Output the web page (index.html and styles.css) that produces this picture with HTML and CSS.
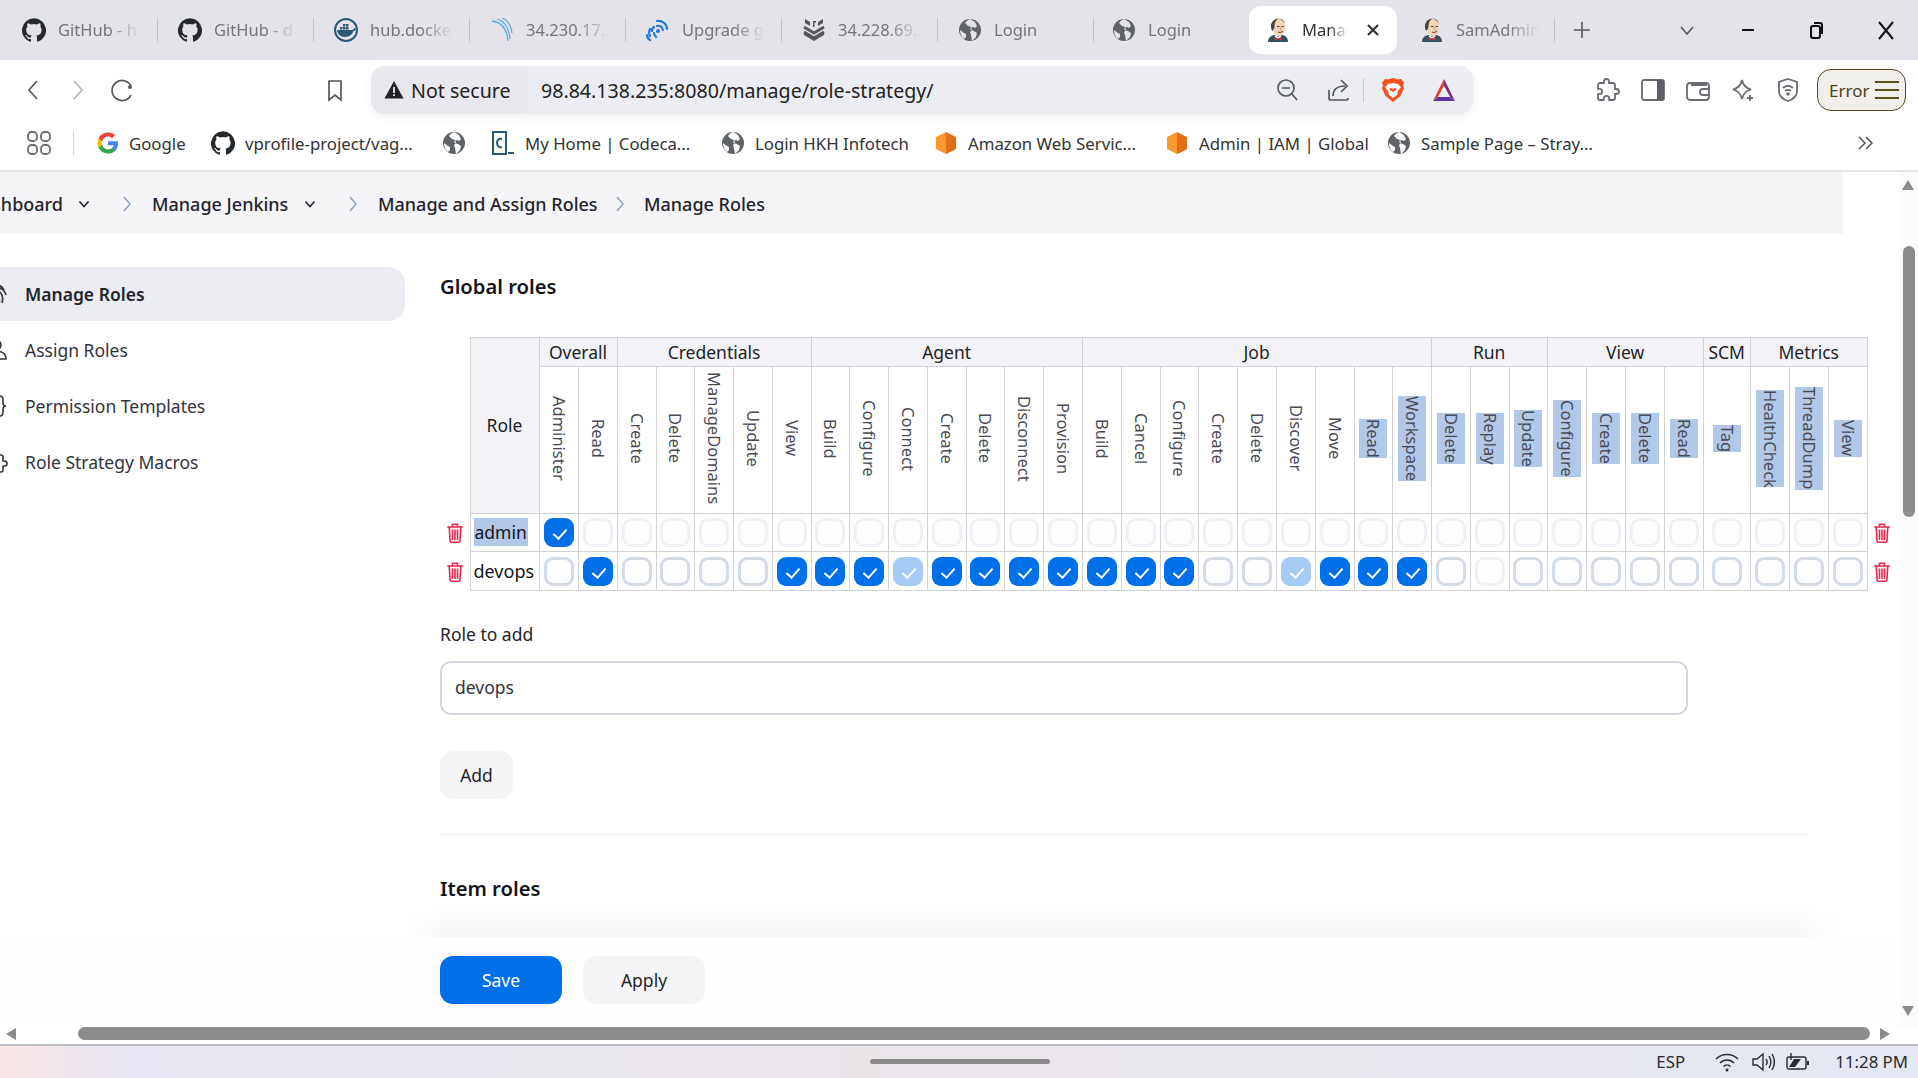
FILE: index.html
```html
<!DOCTYPE html>
<html lang="en">
<head>
<meta charset="utf-8">
<title>Manage Roles</title>
<link rel="stylesheet" href="styles.css">
</head>
<body>
<svg class="defs" width="0" height="0" aria-hidden="true">
  <symbol id="gh" viewBox="0 0 24 24"><path d="M12 .3a12 12 0 0 0-3.8 23.4c.6.1.8-.3.8-.6v-2c-3.3.7-4-1.6-4-1.6-.6-1.4-1.4-1.8-1.4-1.8-1-.7.1-.7.1-.7 1.2.1 1.8 1.2 1.8 1.2 1 1.8 2.8 1.3 3.5 1 0-.8.4-1.3.7-1.6-2.7-.3-5.5-1.3-5.5-6 0-1.2.5-2.3 1.3-3.1-.2-.4-.6-1.6 0-3.2 0 0 1-.3 3.4 1.2a11.5 11.5 0 0 1 6 0c2.3-1.5 3.3-1.2 3.3-1.2.7 1.6.2 2.8.1 3.2.8.8 1.3 1.9 1.3 3.2 0 4.6-2.8 5.6-5.5 5.9.5.4.9 1.1.9 2.2v3.3c0 .3.2.7.8.6A12 12 0 0 0 12 .3" fill="#24292e"/></symbol>
  <symbol id="globe" viewBox="0 0 24 24"><circle cx="12" cy="12" r="11" fill="#5f6368"/><path d="M12 1c-2 1-4 2-5 4l3 3 3 1 1 3-2 2 1 3 1 6 4-4 1-4-3-2-3-1-1-2 3-1 2 1 2-2-2-4zM2 12l4 3 2 1 0 3-2 2c-3-2-4-6-4-9z" fill="#e3e3e9"/></symbol>
  <symbol id="globew" viewBox="0 0 24 24"><circle cx="12" cy="12" r="11" fill="#5f6368"/><path d="M12 1c-2 1-4 2-5 4l3 3 3 1 1 3-2 2 1 3 1 6 4-4 1-4-3-2-3-1-1-2 3-1 2 1 2-2-2-4zM2 12l4 3 2 1 0 3-2 2c-3-2-4-6-4-9z" fill="#fff"/></symbol>
  <symbol id="docker" viewBox="0 0 24 24"><circle cx="12" cy="12" r="11" fill="#e3e3e9" stroke="#2b5a78" stroke-width="2"/><path d="M3 12h15c1 0 2-1 2.500-2l1.500 1c-.5 1.500-1.500 2-2.500 2-1 3-4 6-9 6-4 0-7-3-7.500-7z" fill="#2b5a78"/><path d="M6 9h2.500v2.500H6zM9 9h2.500v2.500H9zM12 9h2.500v2.500H12zM9 6h2.500v2.500H9zM12 6h2.500v2.500H12z" fill="#2b5a78"/></symbol>
  <symbol id="arcs" viewBox="0 0 24 24"><g fill="none" stroke="#5aa9e6" stroke-width="1.300"><path d="M2 3c9 1 15 8 16 20"/><path d="M7 1c7 2 12 9 13 20"/><path d="M12 0c6 2 9 8 10 15"/></g></symbol>
  <symbol id="signal" viewBox="0 0 24 24"><g fill="none" stroke="#1f78d8" stroke-width="2.200" stroke-linecap="round"><path d="M11 3c5-1 10 3 10 8"/><path d="M11 8c3-1 5 1 6 4"/><path d="M8 9c-2 1-2 3-2 4"/><path d="M4 11c-1 2-1 5 0 7"/><path d="M8 15c0 2 1 3 2 4"/><path d="M1 17c0 2 1 4 3 5"/></g><circle cx="12" cy="13" r="2" fill="#1f78d8"/></symbol>
  <symbol id="stack" viewBox="0 0 24 24"><g fill="none" stroke="#55585c" stroke-width="3"><path d="M2 9l10 6 10-6"/><path d="M2 14l10 6 10-6"/></g><path d="M3 1l5 3v4l-5-3zM21 1l-5 3v4l5-3zM12 21l-10-6v2l10 6 10-6v-2z" fill="#55585c"/><path d="M11 3h3v1.500h-1.500V9H11z" fill="#55585c"/></symbol>
  <symbol id="jenkins" viewBox="0 0 24 24"><path d="M2 24c0-4 2-6 6-7l4 1 5-1c3 1 5 3 5 7z" fill="#335061"/><path d="M9 17l3 2 3-2v2l-3 2-3-2z" fill="#fff"/><path d="M8.500 19l3.500 1.500 3.500-1.500v3.500L12 21l-3.500 1.500z" fill="#d33833"/><path d="M6 10c0-6 3-9.500 7-9.500s6.500 3.500 6 9c-.3 5-2.500 8.500-6.500 8.500C10 18.500 8 15.500 7 13c-1.500-.5-2-2.500-1-3z" fill="#f0d6b7"/><path d="M6.500 13C3 8 5.500 1 12.500.4 9.500 2 8.500 5 8.500 8c0 2-1 3.500-2 5z" fill="#4a423c"/><path d="M12.500.4c3.500 0 6 2 6.500 5-2-2.500-4-4-6.500-5z" fill="#8a7f76"/><path d="M11 8.500h2.500M15.500 8.500H18" stroke="#4a423c" stroke-width="1.200"/><path d="M12 14c2 .8 3.500.8 5-.8" stroke="#8a4a40" fill="none" stroke-width="1.100"/><path d="M14.500 9v3h1.500" stroke="#c9a283" fill="none" stroke-width=".8"/></symbol>
  <symbol id="cube" viewBox="0 0 24 24"><path d="M12 1l10 5v12l-10 5z" fill="#e86f17"/><path d="M12 1L2 6v12l10 5V9z" fill="#fb9a2c"/><path d="M12 9l10-3v12l-10 5z" fill="#e07015"/></symbol>
  <symbol id="trash" viewBox="0 0 16 20"><g fill="none" stroke="#e8274b" stroke-width="1.600" stroke-linecap="round"><path d="M.8 4h14.400"/><path d="M5.500 3.500V1.200h5v2.300"/><path d="M2.200 4l.9 14c0 .8.500 1.200 1.200 1.200h7.400c.7 0 1.200-.4 1.200-1.200l.9-14"/><path d="M5.500 7v9.500M8 7v9.500M10.500 7v9.500"/></g></symbol>
</svg>

<div class="screen">
  <header class="tabs">
    <div class="tab"><svg class="fav"><use href="#gh"/></svg><span class="tab-name">GitHub - h</span></div><i class="tab-sep"></i>
    <div class="tab"><svg class="fav"><use href="#gh"/></svg><span class="tab-name">GitHub - d</span></div><i class="tab-sep"></i>
    <div class="tab"><svg class="fav"><use href="#docker"/></svg><span class="tab-name">hub.docke</span></div><i class="tab-sep"></i>
    <div class="tab"><svg class="fav"><use href="#arcs"/></svg><span class="tab-name">34.230.17.1</span></div><i class="tab-sep"></i>
    <div class="tab"><svg class="fav"><use href="#signal"/></svg><span class="tab-name">Upgrade g</span></div><i class="tab-sep"></i>
    <div class="tab"><svg class="fav"><use href="#stack"/></svg><span class="tab-name">34.228.69.</span></div><i class="tab-sep"></i>
    <div class="tab"><svg class="fav"><use href="#globe"/></svg><span class="tab-name">Login</span></div><i class="tab-sep"></i>
    <div class="tab tab-wide"><svg class="fav"><use href="#globe"/></svg><span class="tab-name">Login</span></div>
    <div class="tab tab-active"><svg class="fav"><use href="#jenkins"/></svg><span class="tab-name">Manage</span>
      <svg class="tab-close" viewBox="0 0 14 14"><path d="M2 2l10 10M12 2L2 12"/></svg></div>
    <div class="tab tab-last"><svg class="fav"><use href="#jenkins"/></svg><span class="tab-name">SamAdmin</span></div><i class="tab-sep"></i>
    <div class="win">
      <svg class="win-ic" viewBox="0 0 24 24"><path d="M4 12h16M12 4v16"/></svg>
      <svg class="win-ic" viewBox="0 0 24 24"><path d="M6 9l6 7 6-7"/></svg>
      <svg class="win-ic win-strong" viewBox="0 0 24 24"><path d="M6 12h12"/></svg>
      <svg class="win-ic win-strong" viewBox="0 0 24 24"><rect x="7" y="8" width="9" height="12" rx="2"/><path d="M10 5h6a2 2 0 0 1 2 2v9"/></svg>
      <svg class="win-ic win-strong" viewBox="0 0 24 24"><path d="M5 4l14 17M19 4L5 21"/></svg>
    </div>
  </header>

  <nav class="toolbar">
    <svg class="tool" viewBox="0 0 24 24"><path d="M16 3L8 12l8 9"/></svg>
    <svg class="tool tool-off" viewBox="0 0 24 24"><path d="M8 3l8 9-8 9"/></svg>
    <svg class="tool" viewBox="0 0 24 24"><path d="M20 8a10 10 0 1 0 0 9"/><circle cx="19" cy="9" r="2" class="tool-fill"/></svg>
    <svg class="tool tool-mark" viewBox="0 0 24 24"><path d="M6 3h12v19l-6-5-6 5z"/></svg>
    <div class="address">
      <div class="secure">
        <svg class="warn" viewBox="0 0 20 20"><path d="M10 1l9.500 17.500H.5z" fill="#222"/><path d="M9.100 7h1.800v6H9.100zM9.100 14.300h1.800v1.800H9.100z" fill="#ecedf2"/></svg>
        <span>Not secure</span>
      </div>
      <span class="url">98.84.138.235:8080/manage/role-strategy/</span>
      <div class="addr-tools">
        <svg class="tool" viewBox="0 0 24 24"><circle cx="11" cy="10" r="8"/><path d="M7 10h8M17 16l5 6"/></svg>
        <svg class="tool" viewBox="0 0 24 24"><path d="M3 12v8a2 2 0 0 0 2 2h15a2 2 0 0 0 2-2"/><path d="M7 18c0-7 5-10 12-10"/><path d="M15 2l6 6-6 6"/></svg>
        <i class="addr-sep"></i>
        <svg class="logo" viewBox="0 0 24 24"><path d="M12 0l5 1.500 3-.5 3 3.500-1 3 1 3-3.500 7.500L12 24l-7.500-6L1 10.500l1-3-1-3L4 1l3 .5z" fill="#f4511e"/><path d="M7 6l5-1 5 1 3 3-3 4-1 4-4 3-4-3-1-4-3-4zM10 10l-2 1 1 1 3 2 3-2 1-1-2-1-2 1z" fill="#fff"/></svg>
        <svg class="logo logo-bat" viewBox="0 0 24 24"><path d="M12 1L1 23l5-4 6-11z" fill="#e2422d"/><path d="M12 1l11 22-5-4-6-11z" fill="#7b2b84"/><path d="M1 23h22l-5-4H6z" fill="#5f33a0"/><path d="M12 8l6 11H6z" fill="#ecedf2"/></svg>
      </div>
    </div>
    <div class="extensions">
      <svg class="ext" viewBox="0 0 24 24"><path d="M20.500 11H19V7a2 2 0 0 0-2-2h-4V3.500a2.500 2.500 0 0 0-5 0V5H4a2 2 0 0 0-2 2v3.800h1.500a2.700 2.700 0 0 1 0 5.400H2V20a2 2 0 0 0 2 2h3.800v-1.500a2.700 2.700 0 0 1 5.400 0V22H17a2 2 0 0 0 2-2v-4h1.500a2.500 2.500 0 0 0 0-5z"/></svg>
      <svg class="ext" viewBox="0 0 24 24"><rect x="1" y="2" width="22" height="20" rx="2"/><path d="M16 2h5a2 2 0 0 1 2 2v16a2 2 0 0 1-2 2h-5z" class="ext-fill"/></svg>
      <svg class="ext" viewBox="0 0 24 24"><path d="M4 5h14c1 0 2 1 2 2H5"/><rect x="1" y="5" width="22" height="17" rx="3"/><path d="M23 11h-6a2.500 2.500 0 0 0 0 6h6"/></svg>
      <svg class="ext" viewBox="0 0 24 24"><path d="M11 2c1 5 3 8 9 9.500-6 1.500-8 5-9 9.500-1-4.500-3-8-9-9.500 6-1.500 8-4.500 9-9.500z"/><path d="M19 17v6M16 20h6"/></svg>
      <svg class="ext" viewBox="0 0 24 24"><path d="M12 1l9 3v9c0 4-3 8-9 10-6-2-9-6-9-10V4z"/><path d="M7 10c3-3 7-3 10 0M9 13c2-1.500 4-1.500 6 0"/><circle cx="12" cy="16" r=".8"/></svg>
      <div class="error-btn"><span>Error</span>
        <svg class="burger" viewBox="0 0 24 20"><path d="M0 2h24M0 10h24M0 18h24"/></svg>
      </div>
    </div>
  </nav>

  <div class="bookmarks">
    <svg class="apps" viewBox="0 0 24 24"><rect x="1" y="1" width="9" height="9" rx="3.500"/><rect x="14" y="1" width="9" height="9" rx="3.500"/><rect x="1" y="14" width="9" height="9" rx="3.500"/><rect x="14" y="14" width="9" height="9" rx="3.500"/></svg>
    <i class="bm-sep"></i>
    <div class="bm"><svg class="bm-ic bm-small" viewBox="0 0 24 24"><path d="M23 12.300c0-.8-.1-1.600-.2-2.300H12v4.500h6.200c-.3 1.400-1.100 2.600-2.300 3.400v2.800h3.700c2.200-2 3.400-5 3.400-8.400z" fill="#4285f4"/><path d="M12 23.500c3.100 0 5.700-1 7.600-2.800l-3.700-2.800c-1 .7-2.300 1.100-3.900 1.100-3 0-5.500-2-6.400-4.700H1.700v2.900c1.900 3.800 5.800 6.300 10.300 6.300z" fill="#34a853"/><path d="M5.600 14.300c-.5-1.400-.5-3 0-4.500V6.900H1.700c-1.600 3.200-1.600 7 0 10.300z" fill="#fbbc05"/><path d="M12 5c1.700 0 3.200.6 4.400 1.700l3.300-3.300C17.700 1.600 15 .5 12 .5 7.500.5 3.600 3 1.700 6.900l3.900 2.900C6.500 7 9 5 12 5z" fill="#ea4335"/></svg><span>Google</span></div>
    <div class="bm"><svg class="bm-ic"><use href="#gh"/></svg><span>vprofile-project/vag...</span></div>
    <div class="bm"><svg class="bm-ic"><use href="#globew"/></svg></div>
    <div class="bm bm-code"><svg class="bm-ic" viewBox="0 0 24 24"><path d="M3 1h13v22H3z" fill="none" stroke="#2a5a78" stroke-width="2"/><path d="M12 8c-3-1-5 1-5 4s2 5 5 4" fill="none" stroke="#2a5a78" stroke-width="2"/><path d="M18 21h6v2h-6z" fill="#2a5a78"/></svg><span>My Home | Codeca...</span></div>
    <div class="bm"><svg class="bm-ic"><use href="#globew"/></svg><span>Login HKH Infotech</span></div>
    <div class="bm"><svg class="bm-ic"><use href="#cube"/></svg><span>Amazon Web Servic...</span></div>
    <div class="bm"><svg class="bm-ic"><use href="#cube"/></svg><span>Admin | IAM | Global</span></div>
    <div class="bm"><svg class="bm-ic"><use href="#globew"/></svg><span>Sample Page – Stray...</span></div>
    <svg class="more" viewBox="0 0 24 24"><path d="M6 6l6 6-6 6M13 6l6 6-6 6"/></svg>
  </div>

  <div class="viewport">
    <div class="page">
      <div class="page-inner">
        <div class="crumbs">
          <span class="crumb crumb-first">Dashboard</span>
          <svg class="crumb-down" viewBox="0 0 12 12"><path d="M1.500 3.500L6 8.500l4.500-5"/></svg>
          <svg class="crumb-next crumb-next-a" viewBox="0 0 10 18"><path d="M2 2l6 7-6 7"/></svg>
          <span class="crumb crumb-mj">Manage Jenkins</span>
          <svg class="crumb-down" viewBox="0 0 12 12"><path d="M1.500 3.500L6 8.500l4.500-5"/></svg>
          <svg class="crumb-next crumb-next-a" viewBox="0 0 10 18"><path d="M2 2l6 7-6 7"/></svg>
          <span class="crumb crumb-ma">Manage and Assign Roles</span>
          <svg class="crumb-next crumb-next-b" viewBox="0 0 10 18"><path d="M2 2l6 7-6 7"/></svg>
          <span class="crumb crumb-mr">Manage Roles</span>
        </div>
        <div class="layout">
          <aside class="side">
            <a class="side-item side-on"><svg class="side-ic" viewBox="0 0 24 24"><path d="M4 8c4-7 12-7 16 0M2 13c3-10 17-10 20 0M6 21c-2-6 1-12 6-12s8 5 6 12M9 22c-1-4 0-9 3-9s4 4 3 9M12 16v6"/></svg><span>Manage Roles</span></a>
            <a class="side-item"><svg class="side-ic" viewBox="0 0 24 24"><circle cx="12" cy="7" r="5"/><path d="M12 13c-6 0-10 3-10 8h20c0-5-4-8-10-8z"/></svg><span>Assign Roles</span></a>
            <a class="side-item"><svg class="side-ic" viewBox="0 0 24 24"><path d="M8 2c-3 0-3 2-3 4v3c0 2-1 3-3 3 2 0 3 1 3 3v3c0 2 0 4 3 4M16 2c3 0 3 2 3 4v3c0 2 1 3 3 3-2 0-3 1-3 3v3c0 2 0 4-3 4"/></svg><span>Permission Templates</span></a>
            <a class="side-item"><svg class="side-ic" viewBox="0 0 24 24"><path d="M20.500 11H19V7a2 2 0 0 0-2-2h-4V3.500a2.500 2.500 0 0 0-5 0V5H4a2 2 0 0 0-2 2v3.800h1.500a2.700 2.700 0 0 1 0 5.400H2V20a2 2 0 0 0 2 2h3.800v-1.500a2.700 2.700 0 0 1 5.400 0V22H17a2 2 0 0 0 2-2v-4h1.500a2.500 2.500 0 0 0 0-5z"/></svg><span>Role Strategy Macros</span></a>
          </aside>
          <main class="main">
            <h2 class="section-title">Global roles</h2>
            <table class="grid">
              <colgroup>
                <col class="c-trash"><col class="c-role">
                <col class="c-p"><col class="c-p">
                <col class="c-p"><col class="c-s"><col class="c-p"><col class="c-p"><col class="c-p">
                <col class="c-s"><col class="c-p"><col class="c-p"><col class="c-p"><col class="c-s"><col class="c-p"><col class="c-p">
                <col class="c-p"><col class="c-p"><col class="c-s"><col class="c-p"><col class="c-p"><col class="c-p"><col class="c-p"><col class="c-s"><col class="c-p">
                <col class="c-p"><col class="c-p"><col class="c-s">
                <col class="c-p"><col class="c-p"><col class="c-p"><col class="c-p">
                <col class="c-scm">
                <col class="c-p"><col class="c-p"><col class="c-p">
                <col class="c-trash">
              </colgroup>
              <thead>
                <tr class="r-group">
                  <th class="blank" rowspan="2"></th>
                  <th class="head" rowspan="2">Role</th>
                  <th class="head" colspan="2">Overall</th>
                  <th class="head" colspan="5">Credentials</th>
                  <th class="head" colspan="7">Agent</th>
                  <th class="head" colspan="9">Job</th>
                  <th class="head" colspan="3">Run</th>
                  <th class="head" colspan="4">View</th>
                  <th class="head">SCM</th>
                  <th class="head" colspan="3">Metrics</th>
                  <th class="blank" rowspan="2"></th>
                </tr>
                <tr class="r-perm">
                  <th><span class="v">Administer</span></th><th><span class="v">Read</span></th>
                  <th><span class="v">Create</span></th><th><span class="v">Delete</span></th><th><span class="v">ManageDomains</span></th><th><span class="v">Update</span></th><th><span class="v">View</span></th>
                  <th><span class="v">Build</span></th><th><span class="v">Configure</span></th><th><span class="v">Connect</span></th><th><span class="v">Create</span></th><th><span class="v">Delete</span></th><th><span class="v">Disconnect</span></th><th><span class="v">Provision</span></th>
                  <th><span class="v">Build</span></th><th><span class="v">Cancel</span></th><th><span class="v">Configure</span></th><th><span class="v">Create</span></th><th><span class="v">Delete</span></th><th><span class="v">Discover</span></th><th><span class="v">Move</span></th><th><span class="v sel">Read</span></th><th><span class="v sel">Workspace</span></th>
                  <th><span class="v sel">Delete</span></th><th><span class="v sel">Replay</span></th><th><span class="v sel">Update</span></th>
                  <th><span class="v sel">Configure</span></th><th><span class="v sel">Create</span></th><th><span class="v sel">Delete</span></th><th><span class="v sel">Read</span></th>
                  <th><span class="v sel">Tag</span></th>
                  <th><span class="v sel">HealthCheck</span></th><th><span class="v sel">ThreadDump</span></th><th><span class="v sel">View</span></th>
                </tr>
              </thead>
              <tbody>
                <tr class="r-a">
                  <td class="blank"><svg class="trash"><use href="#trash"/></svg></td>
                  <td class="role"><span class="sel">admin</span></td>
                  <td><i class="cb on"></i></td><td><i class="cb off"></i></td>
                  <td><i class="cb off"></i></td><td><i class="cb off"></i></td><td><i class="cb off"></i></td><td><i class="cb off"></i></td><td><i class="cb off"></i></td>
                  <td><i class="cb off"></i></td><td><i class="cb off"></i></td><td><i class="cb off"></i></td><td><i class="cb off"></i></td><td><i class="cb off"></i></td><td><i class="cb off"></i></td><td><i class="cb off"></i></td>
                  <td><i class="cb off"></i></td><td><i class="cb off"></i></td><td><i class="cb off"></i></td><td><i class="cb off"></i></td><td><i class="cb off"></i></td><td><i class="cb off"></i></td><td><i class="cb off"></i></td><td><i class="cb off"></i></td><td><i class="cb off"></i></td>
                  <td><i class="cb off"></i></td><td><i class="cb off"></i></td><td><i class="cb off"></i></td>
                  <td><i class="cb off"></i></td><td><i class="cb off"></i></td><td><i class="cb off"></i></td><td><i class="cb off"></i></td>
                  <td><i class="cb off"></i></td>
                  <td><i class="cb off"></i></td><td><i class="cb off"></i></td><td><i class="cb off"></i></td>
                  <td class="blank"><svg class="trash"><use href="#trash"/></svg></td>
                </tr>
                <tr class="r-d">
                  <td class="blank"><svg class="trash"><use href="#trash"/></svg></td>
                  <td class="role">devops</td>
                  <td><i class="cb"></i></td><td><i class="cb on"></i></td>
                  <td><i class="cb"></i></td><td><i class="cb"></i></td><td><i class="cb"></i></td><td><i class="cb"></i></td><td><i class="cb on"></i></td>
                  <td><i class="cb on"></i></td><td><i class="cb on"></i></td><td><i class="cb on-off"></i></td><td><i class="cb on"></i></td><td><i class="cb on"></i></td><td><i class="cb on"></i></td><td><i class="cb on"></i></td>
                  <td><i class="cb on"></i></td><td><i class="cb on"></i></td><td><i class="cb on"></i></td><td><i class="cb"></i></td><td><i class="cb"></i></td><td><i class="cb on-off"></i></td><td><i class="cb on"></i></td><td><i class="cb on"></i></td><td><i class="cb on"></i></td>
                  <td><i class="cb"></i></td><td><i class="cb off"></i></td><td><i class="cb"></i></td>
                  <td><i class="cb"></i></td><td><i class="cb"></i></td><td><i class="cb"></i></td><td><i class="cb"></i></td>
                  <td><i class="cb"></i></td>
                  <td><i class="cb"></i></td><td><i class="cb"></i></td><td><i class="cb"></i></td>
                  <td class="blank"><svg class="trash"><use href="#trash"/></svg></td>
                </tr>
              </tbody>
            </table>
            <label class="field-label">Role to add</label>
            <div class="input">devops</div>
            <button class="btn btn-add">Add</button>
            <hr class="rule">
            <h2 class="section-title section-item">Item roles</h2>
          </main>
        </div>
      </div>
      <div class="savebar">
        <button class="btn btn-save">Save</button>
        <button class="btn btn-apply">Apply</button>
      </div>
    </div>
    <div class="vbar">
      <i class="arrow arrow-up"></i>
      <i class="vthumb"></i>
      <i class="arrow arrow-down"></i>
    </div>
  </div>

  <div class="hbar">
    <i class="arrow arrow-left"></i>
    <i class="hthumb"></i>
    <i class="arrow arrow-right"></i>
  </div>

  <footer class="taskbar">
    <i class="handle"></i>
    <div class="tray">
      <span class="lang">ESP</span>
      <svg class="tray-ic" viewBox="0 0 24 20"><path d="M1 7c6-6 16-6 22 0M5 11c4-4 10-4 14 0M8.500 14.500c2-2 5-2 7 0"/><circle cx="12" cy="18" r="1.500" class="tray-fill"/></svg>
      <svg class="tray-ic" viewBox="0 0 24 20"><path d="M2 7h4l6-5v16l-6-5H2z"/><path d="M15 7c1.500 2 1.500 4 0 6M18 4c2.500 4 2.500 8 0 12M21 2c3 5 3 11 0 16"/></svg>
      <svg class="tray-ic" viewBox="0 0 24 20"><rect x="1" y="5" width="19" height="12" rx="2"/><path d="M3 15h6l6-8H8z" class="tray-fill"/><path d="M21 9h2v4h-2z" class="tray-fill"/><path d="M5 1v7" /></svg>
      <span class="clock">11:28 PM</span>
    </div>
  </footer>
</div>
</body>
</html>
```

FILE: styles.css
```css
* { box-sizing: border-box; }
html, body { margin: 0; padding: 0; background: #fff; }
body { font-family: "Noto Sans", "Open Sans", sans-serif; color: #222; overflow: hidden; }
.defs { display: block; height: 0; }
i { display: block; font-style: normal; }

.screen { width: 1918px; height: 1078px; display: flex; flex-direction: column; overflow: hidden; }

/* tab strip */
.tabs { height: 60px; flex: none; background: #e3e3e9; display: flex; align-items: center; padding-left: 2px; font-size: 16.5px; color: #74747a; }
.tab { width: 155px; height: 48px; flex: none; display: flex; align-items: center; gap: 12px; padding-left: 20px; }
.tab-wide { padding-left: 18px; }
.tab-sep { width: 1px; height: 24px; background: #c4c4ca; flex: none; }
.fav { width: 24px; height: 24px; flex: none; }
.tab-name { width: 83px; margin-top: -2px; overflow: hidden; white-space: nowrap; -webkit-mask-image: linear-gradient(to right, #000 60%, transparent 100%); mask-image: linear-gradient(to right, #000 60%, transparent 100%); }
.tab-active { width: 148px; padding-left: 17px; background: #fff; border-radius: 12px; color: #333; }
.tab-active .tab-name { width: 46px; }
.tab-close { width: 14px; height: 14px; margin-left: 6px; fill: none; stroke: #333; stroke-width: 2.2; }
.tab-last { width: 152px; margin-left: 5px; padding-left: 18px; }
.win { display: flex; align-items: center; }
.win-ic { width: 24px; height: 24px; fill: none; stroke: #55555c; stroke-width: 1.6; }
.win-ic:nth-child(1) { margin-left: 15px; }
.win-ic:nth-child(2) { margin-left: 81px; }
.win-ic:nth-child(3) { margin-left: 37px; }
.win-ic:nth-child(4) { margin-left: 44px; }
.win-ic:nth-child(5) { margin-left: 46px; }
.win-strong { stroke: #111; stroke-width: 2; }

/* toolbar */
.toolbar { height: 60px; flex: none; background: #fff; display: flex; align-items: center; padding-left: 21px; }
.tool { width: 24px; height: 24px; flex: none; fill: none; stroke: #55585c; stroke-width: 1.7; }
.tool + .tool { margin-left: 21px; }
.tool-off { stroke: #b4b4b8; }
.tool-fill { fill: #55585c; stroke: none; }
.tool.tool-mark { margin-left: 188px; }
.address { width: 1102px; height: 48px; margin-left: 24px; background: #ecedf2; border-radius: 14px; display: flex; align-items: center; font-size: 19.600px; box-shadow: 0 3px 8px rgba(60, 60, 80, .08); }
.secure { width: 158px; height: 48px; flex: none; display: flex; align-items: center; gap: 7px; padding-left: 13px; background: #e8e8ee; border-radius: 14px 6px 6px 14px; color: #222; white-space: nowrap; }
.warn { width: 20px; height: 20px; flex: none; }
.url { margin-left: 12px; color: #222; white-space: nowrap; }
.addr-tools { margin-left: auto; display: flex; align-items: center; padding-right: 17px; }
.addr-tools .tool + .tool { margin-left: 27px; }
.addr-sep { width: 1px; height: 24px; background: #c8c8ce; margin-left: 13px; }
.logo { width: 24px; height: 26px; margin-left: 17px; flex: none; }
.logo-bat { margin-left: 27px; }
.extensions { display: flex; align-items: center; gap: 21px; margin-left: 123px; }
.ext { width: 24px; height: 24px; flex: none; fill: none; stroke: #696c72; stroke-width: 1.8; }
.ext-fill { fill: #5c5f66; stroke: none; }
.error-btn { width: 89px; height: 42px; margin-left: -4px; display: flex; align-items: center; gap: 5px; padding-left: 11px; border: 1.500px solid #5a4a1e; border-radius: 14px; background: #f0efeb; font-size: 17px; color: #4d3f16; }
.burger { width: 26px; height: 20px; fill: none; stroke: #5a4a1e; stroke-width: 2; }

/* bookmarks */
.bookmarks { height: 52px; flex: none; border-bottom: 2px solid #e4e4e6; display: grid; grid-template-columns: 24px 44px 116px 231px 48px 231px 213px 231px 222px 1fr 24px; align-items: center; padding: 0 41px 4px 27px; font-size: 16.800px; color: #333; }
.apps { width: 24px; height: 24px; fill: none; stroke: #696c72; stroke-width: 1.8; }
.bm-sep { width: 1px; height: 24px; background: #d6d6da; justify-self: center; }
.bm { display: flex; align-items: center; gap: 10px; white-space: nowrap; }
.bm-ic { width: 24px; height: 24px; flex: none; }
.bm-small { width: 22px; height: 22px; margin-left: 2px; }
.bm-code { gap: 11px; }
.more { width: 24px; height: 24px; fill: none; stroke: #55585c; stroke-width: 1.5; }

/* page */
.viewport { height: 855px; flex: none; display: flex; }
.page { width: 1900px; flex: none; position: relative; overflow: hidden; background: #fff; }
.page-inner { margin-left: -40px; }
.crumbs { width: 1883px; height: 62px; padding-top: 1px; background: #f5f5f8; display: flex; align-items: center; font-size: 18px; font-weight: 500; color: #23232b; white-space: nowrap; }
.crumb-first { width: 103px; text-align: right; flex: none; }
.crumb-down { width: 12px; height: 12px; margin-left: 15px; fill: none; stroke: #23232b; stroke-width: 1.6; flex: none; }
.crumb-next { width: 10px; height: 18px; fill: none; stroke: #8fa3c4; stroke-width: 1.5; flex: none; }
.crumb-next-a { margin-left: 32px; }
.crumb-mj { margin-left: 20px; width: 137px; flex: none; }
.crumb-ma { margin-left: 20px; width: 219px; flex: none; }
.crumb-next-b { margin-left: 18px; }
.crumb-mr { margin-left: 19px; }

.layout { display: flex; align-items: flex-start; }
.side { width: 445px; flex: none; padding-top: 33px; display: flex; flex-direction: column; gap: 2px; font-size: 17.500px; color: #33333c; }
.side-item { height: 54px; display: flex; align-items: center; gap: 17px; padding-left: 24px; border-radius: 0 16px 16px 0; }
.side-on { background: #ecedf2; font-weight: 600; color: #23232b; }
.side-ic { width: 24px; height: 24px; flex: none; fill: none; stroke: #33333c; stroke-width: 1.6; }

.main { padding: 34px 0 0 35px; width: 1403px; flex: none; }
.section-title { margin: 0; height: 36px; line-height: 36px; font-size: 20.200px; font-weight: 600; color: #14141c; }

.grid { margin-top: 33px; table-layout: fixed; width: 1457px; border-collapse: collapse; font-size: 17.500px; }
.c-trash { width: 30px; }
.c-role { width: 69px; }
.c-p { width: 39px; }
.c-s { width: 38px; }
.c-scm { width: 47px; }
.grid th, .grid td { border: 1px solid #d2d2d2; padding: 0; text-align: center; vertical-align: middle; font-weight: 400; }
.grid .blank { border: none; background: #fff; padding-bottom: 3px; }
.grid .head { background: #f3f3f7; color: #1e1e26; }
.grid .head[rowspan] { padding-bottom: 2px; }
.r-group { height: 29px; }
.r-perm { height: 147px; }
.r-perm th { padding-bottom: 3px; }
.r-a { height: 38px; }
.r-d { height: 39px; }
.v { display: inline-block; writing-mode: vertical-rl; line-height: 28px; font-size: 16.500px; color: #4a4a55; white-space: nowrap; vertical-align: middle; }
.sel { background: #b1c8e8; }
.grid .role { text-align: left; padding-left: 3px; color: #14141c; white-space: nowrap; line-height: 28px; font-size: 18px; }
.role .sel { display: inline-block; margin-bottom: 1px; font-size: 17.500px; padding: 0 1px; }
.trash { display: inline-block; width: 16px; height: 20px; vertical-align: middle; }
.cb { display: inline-block; position: relative; width: 30px; height: 29px; vertical-align: middle; border-radius: 9px; border: 3px solid #d3dbe6; background: #fdfdfe; }
.cb.off { border-color: #f0f1f6; }
.cb.on, .cb.on-off { border: none; background: #0070e8; }
.cb.on-off { background: #a6cbf5; }
.cb.on::after, .cb.on-off::after { content: ""; position: absolute; left: 12px; top: 8px; width: 6px; height: 11px; border: solid #fff; border-width: 0 2.300px 2.300px 0; transform: rotate(42deg); }

.field-label { display: block; margin-top: 31px; height: 24px; line-height: 24px; font-size: 17.500px; color: #23232b; }
.input { margin-top: 15px; width: 1248px; height: 54px; line-height: 48px; padding-left: 13px; border: 2px solid #d3d8e0; border-radius: 11px; font-size: 17.500px; color: #33333c; }
.btn { display: block; border: none; font-family: inherit; font-size: 17.500px; height: 48px; border-radius: 13px; background: #f5f5f8; color: #23232b; }
.btn-add { margin-top: 36px; width: 73px; }
.rule { margin: 35px 0 0; width: 1368px; height: 1px; border: none; background: #eeeef2; }
.section-item { margin-top: 35px; }

.savebar { position: absolute; left: 0; right: 0; top: 765px; bottom: 0; background: #fefefe; display: flex; gap: 21px; padding: 19px 0 0 440px; align-items: flex-start; }
.savebar::before { content: ""; position: absolute; left: 405px; width: 1440px; top: -32px; height: 32px; background: linear-gradient(to bottom, rgba(240, 240, 242, 0), #f6f6f7); -webkit-mask-image: linear-gradient(to right, transparent, #000 40px, #000 1390px, transparent); mask-image: linear-gradient(to right, transparent, #000 40px, #000 1390px, transparent); }
.btn-save { width: 122px; background: #0070e8; color: #fff; }
.btn-apply { width: 122px; }

/* scrollbars */
.vbar { width: 18px; flex: none; background: #fbfbfb; display: flex; flex-direction: column; align-items: center; position: relative; }
.vthumb { width: 12px; height: 271px; margin-top: 56px; border-radius: 6px; background: #8c8c8c; margin-left: -1px; }
.arrow { width: 0; height: 0; border-style: solid; border-color: transparent; flex: none; }
.arrow-up { margin-top: 8px; margin-left: -2px; border-width: 0 6px 10px; border-bottom-color: #8c8c8c; }
.arrow-down { margin-top: auto; margin-bottom: 11px; margin-left: -2px; border-width: 10px 6px 0; border-top-color: #8c8c8c; }
.hbar { height: 19px; flex: none; display: flex; align-items: flex-start; border-bottom: 2px solid #bcbcc5; background: #fff; }
.hthumb { width: 1792px; height: 13px; margin-left: 62px; border-radius: 7px; background: #8c8c8c; }
.arrow-left { margin: 1px 0 0 6px; border-width: 6px 10px 6px 0; border-right-color: #8c8c8c; }
.arrow-right { margin: 1px 0 0 10px; border-width: 6px 0 6px 10px; border-left-color: #8c8c8c; }

/* taskbar */
.taskbar { flex: 1; display: flex; align-items: center; padding-bottom: 1px; background: linear-gradient(90deg, #f8e6e5 0, #e6e6f2 7%, #ebe5ea 45%, #e4e8f2 100%); }
.handle { width: 180px; height: 5px; margin-left: 870px; border-radius: 3px; background: #8a8a8a; }
.tray { margin-left: auto; display: flex; align-items: center; padding-right: 10px; font-size: 16.800px; color: #2a2a30; }
.lang { width: 28px; white-space: nowrap; }
.tray-ic { width: 24px; height: 20px; fill: none; stroke: #2a2a30; stroke-width: 1.4; }
.tray-ic:nth-child(2) { margin-left: 31px; }
.tray-ic:nth-child(3) { margin-left: 12px; }
.tray-ic:nth-child(4) { margin-left: 11px; }
.tray-fill { fill: #2a2a30; stroke: none; }
.clock { margin-left: 25px; white-space: nowrap; }
```
